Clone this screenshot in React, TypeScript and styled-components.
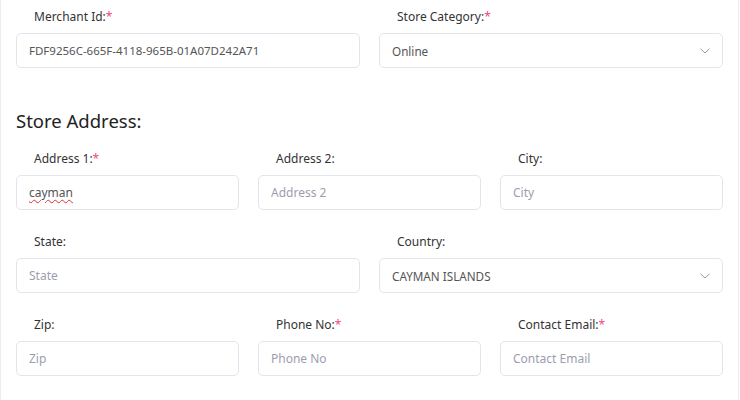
import React from "react";
import styled, { createGlobalStyle } from "styled-components";

const Global = createGlobalStyle`
  html, body { margin: 0; padding: 0; background: #ffffff; }
  body { font-family: "Noto Sans", "Open Sans", sans-serif; }
  * { box-sizing: border-box; }
`;

const Card = styled.div`
  width: 739px;
  min-height: 400px;
  background: #fff;
  border-left: 1px solid #ececf0;
  border-right: 1px solid #ececf0;
  padding: 7px 15px 0 15px;
`;

const Row = styled.div<{ $cols: number; $last?: boolean }>`
  display: grid;
  grid-template-columns: repeat(${(p) => p.$cols}, 1fr);
  column-gap: 19px;
  margin-bottom: ${(p) => (p.$last ? "0" : "22px")};
`;

const Field = styled.div`
  display: flex;
  flex-direction: column;
`;

const Label = styled.label`
  font-size: 12px;
  line-height: 20px;
  color: #333;
  padding-left: 18px;
  margin-bottom: 6px;
`;

const Req = styled.span`
  color: #f2467a;
`;

const InputWrap = styled.div`
  position: relative;
`;

const Input = styled.input<{ $size?: number }>`
  display: block;
  height: 35px;
  width: 100%;
  border: 1px solid #e4e4ee;
  border-radius: 5px;
  padding: 0 12px;
  font-family: "Noto Sans", "Open Sans", sans-serif;
  font-size: ${(p) => p.$size ?? 12}px;
  color: #555;
  background: #fff;
  outline: none;
  &::placeholder { color: #9d9daf; }
`;

const SpellMark = styled.span`
  position: absolute;
  left: 13px;
  top: 0;
  height: 35px;
  display: flex;
  align-items: center;
  font-size: 12px;
  color: transparent;
  pointer-events: none;
  text-decoration: underline wavy #e0303a;
  text-decoration-thickness: 1px;
  text-underline-offset: 2px;
`;

const Select = styled.div`
  height: 35px;
  border: 1px solid #e4e4ee;
  border-radius: 5px;
  padding: 0 12px;
  display: flex;
  align-items: center;
  justify-content: space-between;
  font-size: 11.7px;
  color: #555;
  background: #fff;
`;

const Heading = styled.h2`
  margin: 39px 0 14px 0;
  font-weight: 400;
  font-size: 18.5px;
  line-height: 28px;
  color: #222;
`;

const Chevron = () => (
  <svg width="10" height="6" viewBox="0 0 10 6" fill="none">
    <path d="M0.5 0.8l4.5 4.2L9.5 0.8" stroke="#9a9a9a" strokeWidth="1" />
  </svg>
);

type F = {
  label: string;
  req?: boolean;
  placeholder?: string;
  value?: string;
  select?: boolean;
  spell?: boolean;
  size?: number;
};

const FieldView = ({ f }: { f: F }) => (
  <Field>
    <Label>
      {f.label}
      {f.req && <Req>*</Req>}
    </Label>
    {f.select ? (
      <Select>
        <span>{f.value}</span>
        <Chevron />
      </Select>
    ) : (
      <InputWrap>
        <Input
          placeholder={f.placeholder}
          defaultValue={f.value}
          $size={f.size}
          spellCheck={false}
        />
        {f.spell && <SpellMark>{f.value}</SpellMark>}
      </InputWrap>
    )}
  </Field>
);

const rows: { cols: number; fields: F[] }[] = [
  {
    cols: 3,
    fields: [
      { label: "Address 1:", req: true, value: "cayman", spell: true },
      { label: "Address 2:", placeholder: "Address 2" },
      { label: "City:", placeholder: "City" },
    ],
  },
  {
    cols: 2,
    fields: [
      { label: "State:", placeholder: "State" },
      { label: "Country:", value: "CAYMAN ISLANDS", select: true },
    ],
  },
  {
    cols: 3,
    fields: [
      { label: "Zip:", placeholder: "Zip" },
      { label: "Phone No:", req: true, placeholder: "Phone No" },
      { label: "Contact Email:", req: true, placeholder: "Contact Email" },
    ],
  },
];

export default function App() {
  return (
    <>
      <Global />
      <Card>
        <Row $cols={2} $last>
          <FieldView
            f={{
              label: "Merchant Id:",
              req: true,
              value: "FDF9256C-665F-4118-965B-01A07D242A71",
              size: 11.5,
            }}
          />
          <FieldView f={{ label: "Store Category:", req: true, value: "Online", select: true }} />
        </Row>
        <Heading>Store Address:</Heading>
        {rows.map((r, i) => (
          <Row key={i} $cols={r.cols}>
            {r.fields.map((f) => (
              <FieldView key={f.label} f={f} />
            ))}
          </Row>
        ))}
      </Card>
    </>
  );
}
